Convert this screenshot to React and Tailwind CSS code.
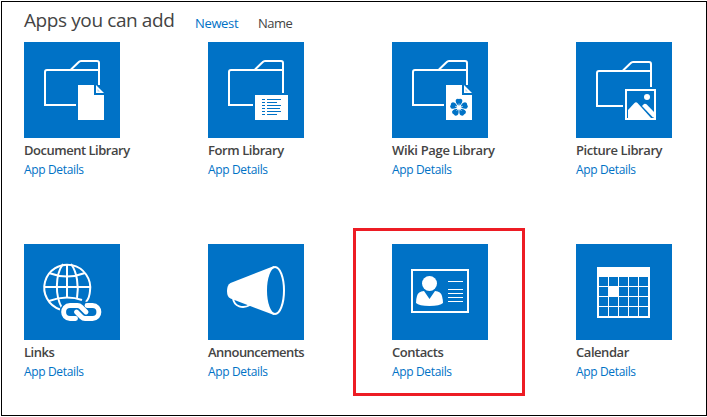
const FOLDER_BODY = 'M75 28H23Q21 28 21 30V63';

function Folder({ bottom, right }) {
  return (
    <g fill="none" stroke="#fff" strokeWidth="2">
      <path d={`${FOLDER_BODY}H${bottom}`} />
      <path d={`M47 27.5L54.5 20.2Q55.6 19 57 19H73Q75 19 75 21V${right}`} />
    </g>
  );
}

function Page() {
  return (
    <g fill="#fff">
      <path d="M54 43H70V53H80V78H54Z" />
      <path d="M72 43L80 51H72Z" />
      <path d="M73.500 47L76 49.500H73.500Z" fill="#0072c6" opacity=".35" />
    </g>
  );
}

function DocumentIcon() {
  return (
    <>
      <Folder bottom={52} right={43} />
      <Page />
    </>
  );
}

function FormIcon() {
  return (
    <>
      <Folder bottom={45} right={51} />
      <path fill="#fff" d="M47 53H80V78H47Z" />
      <path
        stroke="#0072c6"
        fill="none"
        d="M54 57.5h3M59 57.5h14M54 60.5h3M59 60.5h10M54 63.5h3M59 63.5h14M54 66.5h3M59 66.5h13M54 69.5h3M59 69.5h14M54 72.5h3M59 72.5h10"
      />
    </>
  );
}

function WikiIcon() {
  return (
    <>
      <Folder bottom={52} right={43} />
      <Page />
      <g fill="#0072c6" transform="translate(67 65.500)">
        {[0, 72, 144, 216, 288].map((angle) => (
          <path key={angle} transform={`rotate(${angle})`} d="M0-1.5C-1.500-2.500-3.900-5-3.200-7.400Q-2.200-9.500 0-8.600Q2.200-9.500 3.200-7.400C3.900-5 1.500-2.500 0-1.5Z" />
        ))}
      </g>
      <circle cx="67" cy="65.500" r="2" fill="#fff" />
      <g stroke="#fff" strokeWidth=".7" transform="translate(67 65.500)">
        {[0, 72, 144, 216, 288].map((angle) => (
          <path key={angle} transform={`rotate(${angle})`} d="M0 0V-4" />
        ))}
      </g>
    </>
  );
}

function PictureIcon() {
  return (
    <>
      <g transform="translate(0 1)">
        <Folder bottom={47} right={44} />
      </g>
      <path fill="none" stroke="#fff" strokeWidth="2" d="M50 48H79V77H50Z" />
      <circle cx="71" cy="55" r="3" fill="#fff" />
      <path fill="#fff" d="M52 68L58.5 61Q60 59.5 61.5 61L75 76H52Z" />
      <path fill="#fff" d="M66 64L68 62Q69.2 61.3 70.5 62.3L78 70V75.5H77Z" />
    </>
  );
}

const LINK_LEFT = 'M62 68L57 63Q55.500 61.500 53.500 61.500H46C37.500 61.500 37.500 74.500 46 74.500H51.500';
const LINK_RIGHT = 'M52.500 68L57.500 73Q59 74.500 61 74.500H68.500C77 74.500 77 61.500 68.500 61.500H63';

function LinksIcon() {
  return (
    <>
      <g fill="none" stroke="#fff" strokeWidth="2">
        <path d="M36 65.5A23 23 0 1 1 66 47Q65.500 54 62 58" />
        <path d="M20 43H67M25 29Q43 36 61 29M25 57Q34 53.500 43 53.500Q51 53.500 58 56" />
        <path d="M39 20C31 31 31 52 38 64M47 20C53 28 55 42 53 54M43 20V53" />
      </g>
      <g fill="none" strokeLinecap="round" strokeLinejoin="round">
        <path stroke="#0072c6" strokeWidth="7.500" d={LINK_LEFT} />
        <path stroke="#0072c6" strokeWidth="7.500" d={LINK_RIGHT} />
        <path stroke="#fff" strokeWidth="4.900" d={LINK_LEFT} />
        <path stroke="#fff" strokeWidth="4.900" d={LINK_RIGHT} />
      </g>
    </>
  );
}

function AnnouncementsIcon() {
  return (
    <>
      <path fill="none" stroke="#fff" strokeWidth="2" d="M25 54C26 63 35 65 42 61" />
      <path fill="#fff" d="M66 22L22.500 39Q19 41 19 47Q19 53 22.500 54.500L66 71Z" />
      <ellipse cx="67" cy="46.500" rx="9" ry="23.500" fill="#0072c6" stroke="#fff" strokeWidth="2" />
    </>
  );
}

function ContactsIcon() {
  return (
    <>
      <path fill="none" stroke="#fff" strokeWidth="2" d="M20 26H76V68H20Z" />
      <circle cx="37.500" cy="39.500" r="7.500" fill="#fff" />
      <path fill="#fff" d="M32 47L37.500 55L43 47Q49 47.500 50 52Q51 56 51 59Q48 62 37.500 62Q27 62 24 59Q24 55 25 52Q26 47.500 32 47Z" />
      <path stroke="#fff" d="M56 37.500H71M56 45.500H71M56 49.500H71M56 53.500H71M56 57.500H71" />
    </>
  );
}

function CalendarIcon() {
  const cells = [];
  for (let row = 0; row < 4; row++) {
    for (let col = 0; col < 5; col++) {
      if (row === 1 && col === 1) continue;
      cells.push(<rect key={`${row}-${col}`} x={23 + col * 10} y={33 + row * 10} width="9" height="9" fill="#0072c6" />);
    }
  }
  return (
    <>
      <path fill="#fff" d="M21 23H74V74H21Z" />
      {cells}
    </>
  );
}

const apps = [
  { name: 'Document Library', Icon: DocumentIcon, tracking: 'tracking-[-0.48px]' },
  { name: 'Form Library', Icon: FormIcon, tracking: 'tracking-[-0.42px]' },
  { name: 'Wiki Page Library', Icon: WikiIcon, tracking: 'tracking-[-0.34px]' },
  { name: 'Picture Library', Icon: PictureIcon, tracking: 'tracking-[-0.42px]' },
  { name: 'Links', Icon: LinksIcon, tracking: 'tracking-[-0.5px]' },
  { name: 'Announcements', Icon: AnnouncementsIcon, tracking: 'tracking-[-0.54px]' },
  { name: 'Contacts', Icon: ContactsIcon, tracking: 'tracking-[-0.45px]', highlighted: true },
  { name: 'Calendar', Icon: CalendarIcon, tracking: 'tracking-[-0.45px]' },
];

function AppTile({ name, Icon, tracking, highlighted }) {
  return (
    <article className="relative h-[202px] whitespace-nowrap">
      {highlighted && <div className="pointer-events-none absolute -left-[39px] -top-[16px] h-[168px] w-[172px] border-3 border-[#ed1c24]" />}
      <svg className="block size-24 bg-[#0072c6]" viewBox="0 0 96 96" aria-hidden="true">
        <Icon />
      </svg>
      <h2 className={`mt-[3px] text-[13px] leading-[18px] font-semibold text-[#444] ${tracking}`}>{name}</h2>
      <a className="mt-[3px] block text-[12px] leading-4 tracking-[-0.35px] text-[#0072c6]">App Details</a>
    </article>
  );
}

export default function App() {
  return (
    <div className="h-[417px] w-[707px] overflow-hidden bg-white pl-px pt-px font-['Open_Sans','Noto_Sans',sans-serif]">
      <main className="h-[415px] w-[706px] border border-black pl-[22px]">
        <header className="flex h-10 items-start whitespace-nowrap pt-[5px]">
          <h1 className="w-[171px] text-[19px] leading-[26px] tracking-[-0.4px] text-[#444]">Apps you can add</h1>
          <a className="mt-[7px] w-[63px] text-[13px] leading-[18px] tracking-[-0.35px] text-[#0072c6]">Newest</a>
          <span className="mt-[7px] text-[13px] leading-[18px] tracking-[-0.5px] text-[#444]">Name</span>
        </header>
        <section className="grid grid-cols-[repeat(4,184px)]">
          {apps.map((app) => (
            <AppTile key={app.name} {...app} />
          ))}
        </section>
      </main>
    </div>
  );
}
